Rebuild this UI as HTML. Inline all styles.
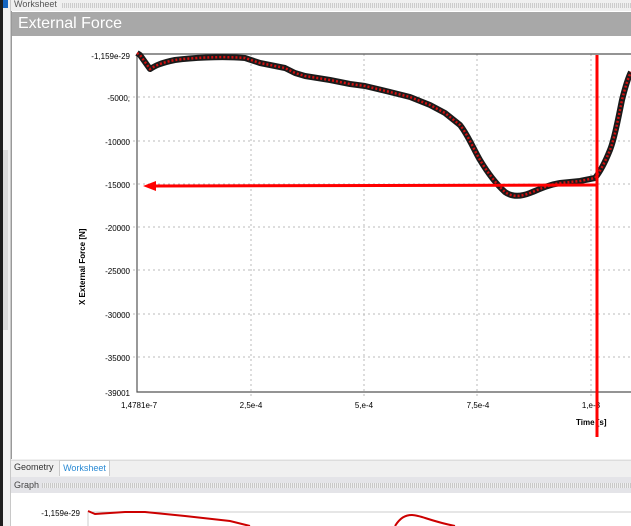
<html><head><style>
body{margin:0;width:631px;height:526px;overflow:hidden;background:#f0f0f0;font-family:"Liberation Sans",sans-serif;position:relative}
.a{position:absolute}
</style></head><body>
<div class="a" style="left:0;top:0;width:3px;height:526px;background:#1e1e1e"></div>
<div class="a" style="left:3px;top:0;width:5px;height:8px;background:#1565c0"></div>
<div class="a" style="left:3px;top:150px;width:5px;height:180px;background:#dcdcdc"></div>
<div class="a" style="left:10px;top:0;width:1px;height:526px;background:#c8c8c8"></div>
<div class="a" style="left:14px;top:0;font-size:9px;color:#555;line-height:9px">Worksheet</div>
<div class="a" style="left:62px;top:3px;width:569px;height:5px;background:repeating-linear-gradient(90deg,#ccc 0 1px,#eee 1px 2px)"></div>
<div class="a" style="left:11px;top:11px;width:620px;height:448px;background:#fff;border-left:1px solid #999"></div>
<div class="a" style="left:12px;top:12px;width:619px;height:24px;background:#a8a8a8;color:#fff;font-size:16px;line-height:24px;padding-left:6px">External Force</div>
<svg class="a" style="left:0;top:0" width="631" height="460">
<g stroke="#bbb" stroke-dasharray="2,3" stroke-width="1">
<line x1="118" y1="97" x2="631" y2="97"/><line x1="118" y1="141" x2="631" y2="141"/><line x1="118" y1="184" x2="631" y2="184"/><line x1="118" y1="227" x2="631" y2="227"/><line x1="118" y1="270" x2="631" y2="270"/><line x1="118" y1="314" x2="631" y2="314"/><line x1="118" y1="357" x2="631" y2="357"/>
<line x1="251" y1="54" x2="251" y2="398"/><line x1="364" y1="54" x2="364" y2="398"/><line x1="477" y1="54" x2="477" y2="398"/><line x1="591" y1="54" x2="591" y2="398"/>
</g>
<path d="M137 54H631M137 54V392H631" fill="none" stroke="#555" stroke-width="1.2"/>
<g font-family="Liberation Sans" font-size="8" text-anchor="end">
<text x="130" y="59">-1,159e-29</text><text x="130" y="101">-5000,</text><text x="130" y="145">-10000</text><text x="130" y="188">-15000</text><text x="130" y="231">-20000</text><text x="130" y="274">-25000</text><text x="130" y="318">-30000</text><text x="130" y="361">-35000</text><text x="130" y="396">-39001</text>
</g>
<g font-family="Liberation Sans" font-size="8" text-anchor="middle">
<text x="139" y="408">1,4781e-7</text><text x="251" y="408">2,5e-4</text><text x="364" y="408">5,e-4</text><text x="478" y="408">7,5e-4</text><text x="591" y="408">1,e-3</text>
</g>
<text x="576" y="425" font-family="Liberation Sans" font-size="8" font-weight="bold">Time [s]</text>
<text transform="translate(85,305) rotate(-90)" font-family="Liberation Sans" font-size="8" font-weight="bold">X External Force [N]</text>
<path id="c" d="M137 53L140 55L150 69C155 66 160 63 175 60C190 58 220 56 245 58L260 63L285 68L295 73L305 76L330 80L350 84L365 86L390 92L410 97L430 105L445 113L460 125C468 135 474 150 480 160C486 170 495 183 505 192C512 197 520 197 530 193C540 189 548 185 560 183L580 181L595 178C600 172 606 160 610 150C614 140 618 120 622 100C625 88 628 78 631 72" fill="none" stroke="#1a1a1a" stroke-width="6" stroke-linejoin="round"/>
<path d="M137 53L140 55L150 69C155 66 160 63 175 60C190 58 220 56 245 58L260 63L285 68L295 73L305 76L330 80L350 84L365 86L390 92L410 97L430 105L445 113L460 125C468 135 474 150 480 160C486 170 495 183 505 192C512 197 520 197 530 193C540 189 548 185 560 183L580 181L595 178C600 172 606 160 610 150C614 140 618 120 622 100C625 88 628 78 631 72" fill="none" stroke="#d01010" stroke-width="2.5" stroke-dasharray="2,2"/>
<line x1="152" y1="186" x2="597" y2="185" stroke="#f00" stroke-width="3"/>
<path d="M143 186L156 181L156 191Z" fill="#f00"/>
<line x1="597" y1="55" x2="597" y2="437" stroke="#f00" stroke-width="3"/>
</svg>
<div class="a" style="left:11px;top:460px;width:620px;height:1px;background:#ddd"></div>
<div class="a" style="left:14px;top:462px;font-size:9px;color:#333">Geometry</div>
<div class="a" style="left:59px;top:460px;width:49px;height:15px;background:#fff;border:1px solid #ccc;border-bottom:none;font-size:9px;color:#2a8ad4;line-height:15px;text-align:center">Worksheet</div>
<div class="a" style="left:11px;top:477px;width:620px;height:16px;background:#e4e4e8"></div>
<div class="a" style="left:14px;top:480px;font-size:9px;color:#444">Graph</div>
<div class="a" style="left:42px;top:483px;width:589px;height:5px;background:repeating-linear-gradient(90deg,#c8c8c8 0 1px,#eee 1px 2px)"></div>
<div class="a" style="left:11px;top:493px;width:620px;height:33px;background:#fff"></div>
<svg class="a" style="left:0;top:493px" width="631" height="33">
<line x1="88" y1="19" x2="631" y2="19" stroke="#ccc"/><line x1="88" y1="19" x2="88" y2="33" stroke="#ccc"/>
<text x="80" y="23" font-family="Liberation Sans" font-size="8" text-anchor="end">-1,159e-29</text>
<path d="M88 18L95 21L125 19L145 19L185 23L230 28L250 33" fill="none" stroke="#c00" stroke-width="2"/>
<path d="M395 33C400 25 405 22 412 22C420 22 430 28 455 33" fill="none" stroke="#c00" stroke-width="2"/>
</svg>
</body></html>
